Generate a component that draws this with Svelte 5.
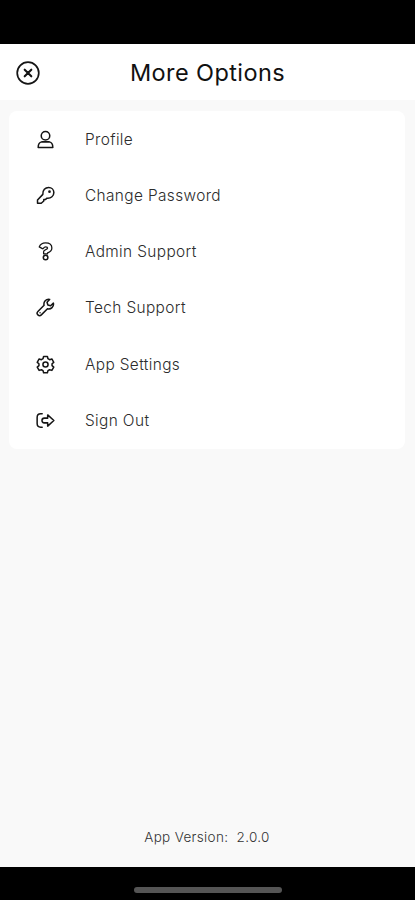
<script lang="ts">
  type Option = { icon: string; label: string };

  const options: Option[] = [
    { icon: 'profile', label: 'Profile' },
    { icon: 'key', label: 'Change Password' },
    { icon: 'question', label: 'Admin Support' },
    { icon: 'wrench', label: 'Tech Support' },
    { icon: 'gear', label: 'App Settings' },
    { icon: 'signout', label: 'Sign Out' }
  ];

  const version = '2.0.0';
</script>

<div class="screen">
  <div class="status-bar"></div>

  <header class="header">
    <button class="close" aria-label="Close">
      <svg width="24" height="24" viewBox="0 0 24 24">
        <circle cx="12" cy="12" r="10.8" />
        <path class="cross" d="M8.7 8.7l6.6 6.6M15.3 8.7l-6.6 6.6" />
      </svg>
    </button>
    <h1>More Options</h1>
  </header>

  <main class="content">
    <nav class="card">
      {#each options as option}
        <button class="row">
          <svg class="icon" width="19" height="19" viewBox="0 0 20 20">
            {#if option.icon === 'profile'}
              <circle cx="10" cy="6" r="4.5" />
              <path d="M5.9 12.5h8.2q3.6.6 3.6 5.9H2.3q0-5.3 3.6-5.9z" />
            {:else if option.icon === 'key'}
              <path d="M7.2 8.8C6.8 4.5 9.8 1.5 13.3 1.5c3.2 0 5.5 2.4 5.5 5.4 0 3.6-3 6.3-7.2 5.9L9.8 14.3H8.2v1.5L5.5 18.2H1.6v-3.4z" />
              <circle class="dot" cx="14.2" cy="6" r="1.4" />
            {:else if option.icon === 'question'}
              <path class="thin" d="M3.400 5.200Q5 .9 10 .9q6.700 0 6.700 5.400 0 3.700-4.500 5.100v1H8v-2.100q0-1.400 2.300-2.200 1.900-.7 1.900-1.700 0-1.300-2-1.300-1.300 0-2.500 1.700-.4.500-1 .1z" />
              <circle cx="10.1" cy="16.4" r="2.400" />
            {:else if option.icon === 'wrench'}
              <path d="M14.3 1.500a5 5 0 0 0-5.800 6.200L2 14.200a2.500 2.500 0 0 0 3.600 3.600l6.500-6.500a5 5 0 0 0 6.200-5.900l-2.900 2.700-2.900-.8-.9-2.900z" />
              <circle class="dot" cx="4.300" cy="15.500" r=".8" />
            {:else if option.icon === 'gear'}
              <path d="M8 1.500h4l.6 2.400 1.700 1 2.400-.7 2 3.500-1.800 1.500v2l1.800 1.600-2 3.400-2.400-.7-1.700 1-.6 2.300H8l-.6-2.300-1.700-1-2.400.7-2-3.400 1.800-1.600v-2L1.300 7.700l2-3.500 2.400.7 1.700-1z" />
              <circle cx="10" cy="10" r="2.700" />
            {:else}
              <path d="M6.500 3H5Q1.200 3 1.200 6.800v6.400Q1.200 17 5 17h1.500" />
              <path d="M12.300 4.100l6.500 5.900-6.500 5.900v-3.400H8.800Q6.300 12.500 6.300 10t2.500-2.500h3.500z" />
            {/if}
          </svg>
          <span class="label">{option.label}</span>
        </button>
      {/each}
    </nav>

    <p class="version">App Version:&nbsp; {version}</p>
  </main>

  <footer class="home-bar">
    <div class="indicator"></div>
  </footer>
</div>

<style>
  :global(body) {
    margin: 0;
    background: #000;
  }

  .screen {
    display: flex;
    flex-direction: column;
    height: 900px;
    font-family: Inter, 'Liberation Sans', sans-serif;
    background: #f9f9f9;
  }

  .status-bar {
    height: 44px;
    background: #000;
  }

  .header {
    display: grid;
    grid-template-columns: 56px 1fr 56px;
    align-items: center;
    height: 56px;
    padding-top: 1px;
    box-sizing: border-box;
    background: #fff;
  }

  button {
    padding: 0;
    border: none;
    background: none;
    font: inherit;
    cursor: pointer;
  }

  .close {
    display: flex;
    justify-content: center;
  }

  svg {
    fill: none;
    stroke: #151515;
    stroke-linecap: round;
    stroke-linejoin: round;
  }

  .close svg {
    stroke-width: 1.7;
  }

  .close .cross {
    stroke-width: 2.1;
  }

  h1 {
    margin: 0;
    text-align: center;
    font-size: 23.5px;
    font-weight: 400;
    letter-spacing: 0.42px;
    line-height: 30px;
    color: #111;
  }

  .content {
    flex: 1;
    display: flex;
    flex-direction: column;
    justify-content: space-between;
    padding: 11px 10px 20px 9px;
  }

  .card {
    display: flex;
    flex-direction: column;
    border-radius: 8px;
    background: #fff;
  }

  .row {
    display: flex;
    align-items: center;
    gap: 30px;
    height: 56.25px;
    padding-left: 27px;
    text-align: left;
  }

  .icon {
    stroke-width: 1.6;
  }

  .icon .thin {
    stroke-width: 1.35;
  }

  .icon .dot {
    fill: #151515;
    stroke: none;
  }

  .label {
    font-size: 15.4px;
    font-weight: 300;
    letter-spacing: 0.38px;
    color: #2c2c2c;
  }

  .version {
    margin: 0;
    text-align: center;
    font-size: 13.5px;
    font-weight: 300;
    line-height: 20px;
    letter-spacing: 0.33px;
    color: #333;
  }

  .home-bar {
    display: flex;
    justify-content: center;
    height: 33px;
    padding-top: 20px;
    box-sizing: border-box;
    background: #000;
  }

  .indicator {
    width: 148px;
    height: 6px;
    border-radius: 3px;
    background: #555;
  }
</style>
